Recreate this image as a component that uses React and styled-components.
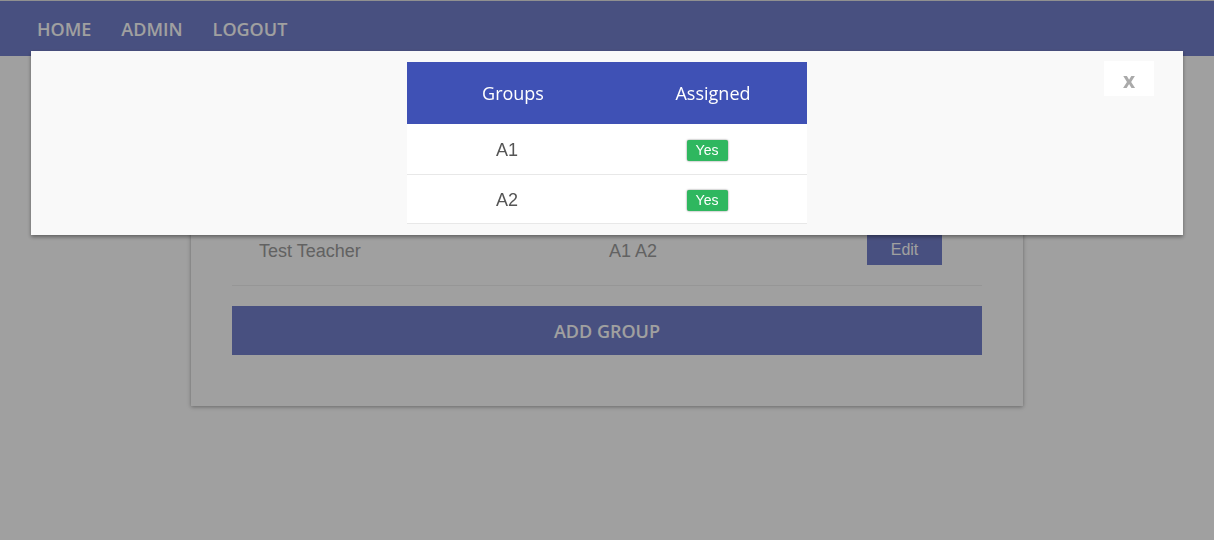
import React from "react";
import styled, { createGlobalStyle } from "styled-components";

const Global = createGlobalStyle`
  html, body { margin: 0; padding: 0; }
  body {
    background: #ffffff;
    font-family: "Open Sans", "Liberation Sans", sans-serif;
    width: 1214px;
    height: 540px;
    overflow: hidden;
  }
`;

const Header = styled.header`
  height: 55px;
  border-top: 1px solid #e6e6e6;
  background: #7480cc;
  display: flex;
  align-items: center;
  gap: 30px;
  padding: 0 37px;
`;

const NavLink = styled.a`
  font-family: "Open Sans", sans-serif;
  font-weight: 600;
  font-size: 18px;
  color: #ffffff;
  text-decoration: none;
`;

const Main = styled.main`
  padding-top: 40px;
`;

const Card = styled.section`
  width: 832px;
  margin: 0 auto;
  box-sizing: border-box;
  background: #ffffff;
  padding: 0 41px 51px;
  box-shadow: 0 1px 4px rgba(0, 0, 0, 0.35);
`;

const CardTitle = styled.h2`
  margin: 0;
  height: 68px;
  display: flex;
  align-items: center;
  justify-content: center;
  font-size: 22px;
  font-weight: 600;
  color: #555;
`;

const Row = styled.div`
  display: grid;
  grid-template-columns: 350px 258px 1fr;
  align-items: center;
  height: ${(p) => (p.$head ? "50px" : "70px")};
  background: #ffffff;
  border-bottom: 1px solid #f0f0f0;
  font-family: "Liberation Sans", Arial, sans-serif;
  font-size: 18px;
  color: #9c9c9c;
`;

const Cell = styled.div`
  padding-left: 27px;
  padding-top: ${(p) => (p.$text ? "2px" : "0")};
`;

const EditButton = styled.button`
  width: 75px;
  height: 30px;
  border: none;
  background: #7480cc;
  color: #ffffff;
  font-family: "Liberation Sans", Arial, sans-serif;
  font-size: 16px;
  padding: 0;
`;

const AddButton = styled.button`
  display: block;
  width: 100%;
  height: 49px;
  margin-top: 20px;
  border: none;
  background: #7480cc;
  color: #ffffff;
  font-family: "Open Sans", sans-serif;
  font-weight: 600;
  font-size: 18px;
`;

const Overlay = styled.div`
  position: fixed;
  inset: 0;
  background: rgba(0, 0, 0, 0.373);
  padding: 51px 31px 0;
`;

const Modal = styled.div`
  position: relative;
  background: #f9f9f9;
  height: 184px;
  box-sizing: border-box;
  padding-top: 11px;
  box-shadow: 0 2px 4px rgba(0, 0, 0, 0.4);
`;

const CloseButton = styled.button`
  position: absolute;
  top: 10px;
  right: 29px;
  width: 50px;
  height: 35px;
  border: none;
  background: #ffffff;
  color: #aaaaaa;
  font-family: "Open Sans", sans-serif;
  font-weight: 700;
  font-size: 21px;
  line-height: 1;
  padding: 3px 0 0;
`;

const Table = styled.table`
  width: 400px;
  margin: 0 auto;
  border-collapse: collapse;
  background: #ffffff;
`;

const Th = styled.th`
  height: 62px;
  width: 50%;
  padding: 0 0 0 12px;
  background: #3f51b5;
  color: #ffffff;
  font-family: "Open Sans", sans-serif;
  font-weight: 400;
  font-size: 18px;
  text-align: center;
`;

const BodyRow = styled.tr`
  height: ${(p) => (p.$first ? "50px" : "49px")};
`;

const Td = styled.td`
  padding: 3px 0 0;
  text-align: center;
  border-bottom: 1px solid #e8e8e8;
  font-family: "Liberation Sans", Arial, sans-serif;
  font-size: 18px;
  color: #555555;
`;

const Badge = styled.span`
  display: inline-block;
  width: 41px;
  height: 21px;
  line-height: 21px;
  background: #2fb75f;
  color: #ffffff;
  font-family: "Liberation Sans", Arial, sans-serif;
  font-size: 14px;
  border-radius: 2px;
  box-shadow: 0 0 2px rgba(0, 0, 0, 0.55);
  vertical-align: middle;
`;

const groups = ["A1", "A2"];

export default function App() {
  return (
    <>
      <Global />
      <Header>
        <NavLink>HOME</NavLink>
        <NavLink>ADMIN</NavLink>
        <NavLink>LOGOUT</NavLink>
      </Header>
      <Main>
        <Card>
          <CardTitle>Teachers</CardTitle>
          <Row $head>
            <Cell>Name</Cell>
            <Cell>Groups</Cell>
            <Cell></Cell>
          </Row>
          <Row>
            <Cell $text>Test Teacher</Cell>
            <Cell $text>A1 A2</Cell>
            <Cell>
              <EditButton>Edit</EditButton>
            </Cell>
          </Row>
          <AddButton>ADD GROUP</AddButton>
        </Card>
      </Main>
      <Overlay>
        <Modal>
          <CloseButton>x</CloseButton>
          <Table>
            <thead>
              <tr>
                <Th>Groups</Th>
                <Th>Assigned</Th>
              </tr>
            </thead>
            <tbody>
              {groups.map((g, i) => (
                <BodyRow key={g} $first={i === 0}>
                  <Td>{g}</Td>
                  <Td>
                    <Badge>Yes</Badge>
                  </Td>
                </BodyRow>
              ))}
            </tbody>
          </Table>
        </Modal>
      </Overlay>
    </>
  );
}
